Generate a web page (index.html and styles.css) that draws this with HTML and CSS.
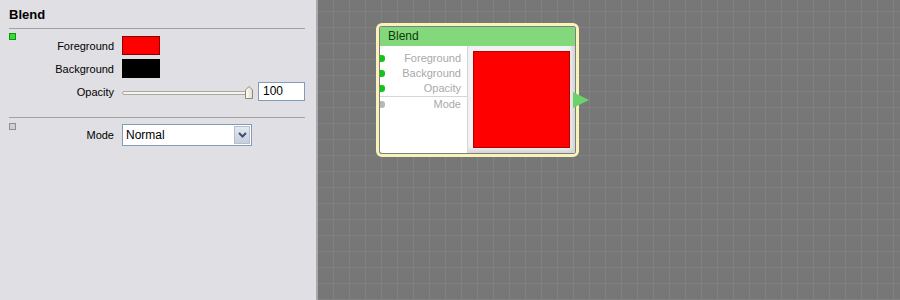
FILE: index.html
```html
<!DOCTYPE html>
<html lang="en">
<head>
    <meta charset="UTF-8">
    <title>Blend</title>
    <link rel="stylesheet" href="styles.css">
</head>
<body>
<div class="app">

    <!-- Properties panel -->
    <div class="panel">
        <h1 class="panel-title">Blend</h1>

        <div class="group">
            <span class="flag flag-on"></span>
            <div class="fields">
                <span class="field-label">Foreground</span>
                <span class="swatch swatch-red"></span>
                <span class="field-label">Background</span>
                <span class="swatch swatch-black"></span>
                <span class="field-label">Opacity</span>
                <div class="slider-row">
                    <div class="slider">
                        <div class="track"></div>
                        <svg class="thumb" width="8" height="13" viewBox="0 0 8 13">
                            <defs>
                                <linearGradient id="tg" x1="0" y1="0" x2="1" y2="0">
                                    <stop offset="0" stop-color="#ffffff"/>
                                    <stop offset="1" stop-color="#e2ddc6"/>
                                </linearGradient>
                            </defs>
                            <polygon points="0.5,4 4,0.5 7.5,4 7.5,12.5 0.5,12.5" fill="url(#tg)" stroke="#8c8a7c"/>
                        </svg>
                    </div>
                    <div class="num-box">100</div>
                </div>
            </div>
        </div>

        <div class="group group-last">
            <span class="flag flag-off"></span>
            <div class="fields fields-mode">
                <span class="field-label">Mode</span>
                <div class="select">
                    <span class="select-text">Normal</span>
                    <span class="select-btn">
                        <svg width="9" height="6" viewBox="0 0 9 6">
                            <polyline points="1,1 4.5,4.5 8,1" fill="none" stroke="#3d4f6e" stroke-width="2"/>
                        </svg>
                    </span>
                </div>
            </div>
        </div>
    </div>

    <!-- Node canvas -->
    <div class="canvas">
        <div class="node">
            <div class="node-box">
                <div class="node-head">Blend</div>
                <div class="node-body">
                    <div class="node-ports">
                        <div class="port"><span class="dot"></span>Foreground</div>
                        <div class="port"><span class="dot"></span>Background</div>
                        <div class="port"><span class="dot"></span>Opacity</div>
                        <div class="port port-mode"><span class="dot dot-off"></span>Mode</div>
                    </div>
                    <div class="node-preview">
                        <div class="preview-square"></div>
                    </div>
                </div>
            </div>
        </div>
        <svg class="node-out" width="16" height="16" viewBox="0 0 16 16">
            <polygon points="0,0 16,8 0,16" fill="#6bd16b"/>
        </svg>
    </div>

</div>
</body>
</html>
```

FILE: styles.css
```css
html, body {
    margin: 0;
    height: 100%;
}
body {
    font-family: "Liberation Sans", Arial, sans-serif;
    font-size: 11px;
    color: #000;
}
.app {
    display: flex;
    height: 300px;
}

/* left panel */
.panel {
    width: 316px;
    flex: none;
    background-color: #e0dfe3;
    border-right: 2px solid #a8a8ab;
}
.panel-title {
    margin: 0;
    height: 28px;
    box-sizing: border-box;
    padding: 7px 0 0 9px;
    font-size: 13px;
    line-height: 16px;
    font-weight: bold;
}
.group {
    display: flex;
    margin: 0 11px 0 9px;
    border-top: 1px solid #a2a2a2;
    padding-bottom: 16px;
}
.flag {
    flex: none;
    width: 5px;
    height: 5px;
    margin-top: 4px;
}
.flag-on {
    background-color: #2fe02f;
    border: 1px solid #129012;
}
.flag-off {
    background-color: #cfcfcf;
    border: 1px solid #8f8f8f;
    margin-top: 5px;
}
.fields {
    display: grid;
    grid-template-columns: 98px auto;
    grid-auto-rows: 19px;
    column-gap: 8px;
    row-gap: 4px;
    padding-top: 7px;
    align-items: center;
}
.fields-mode {
    grid-auto-rows: 22px;
    padding-top: 6px;
}
.field-label {
    text-align: right;
}
.swatch {
    width: 36px;
    height: 17px;
}
.swatch-red {
    background-color: #ff0000;
    border: 1px solid #8a0000;
}
.swatch-black {
    background-color: #000;
    border: 1px solid #000;
}
.slider-row {
    display: flex;
    align-items: center;
    gap: 6px;
}
.slider {
    position: relative;
    width: 130px;
    height: 19px;
}
.track {
    position: absolute;
    left: 0;
    right: 4px;
    top: 9px;
    height: 2px;
    background-color: #f4f3ee;
    border: 1px solid #a9a9a2;
    border-radius: 2px;
}
.thumb {
    position: absolute;
    left: 123px;
    top: 4px;
}
.num-box {
    width: 41px;
    height: 17px;
    line-height: 17px;
    padding-left: 4px;
    background-color: #fff;
    border: 1px solid #7f9db9;
    font-size: 12px;
}
.select {
    display: flex;
    width: 128px;
    height: 20px;
    background-color: #fff;
    border: 1px solid #7f9db9;
}
.select-text {
    flex: 1;
    line-height: 20px;
    padding-left: 3px;
    font-size: 12px;
}
.select-btn {
    width: 16px;
    margin: 1px;
    display: flex;
    align-items: center;
    justify-content: center;
    background: linear-gradient(#e4e8f0, #c6cfdd);
    border: 1px solid #b4bfd1;
    box-sizing: border-box;
}

/* canvas */
.canvas {
    position: relative;
    flex: 1;
    background-color: #777777;
    background-image:
        linear-gradient(to right, #818181 1px, transparent 1px),
        linear-gradient(to bottom, #818181 1px, transparent 1px);
    background-size: 16px 16px;
    background-position: 15px 11px;
}
.node {
    position: absolute;
    left: 58px;
    top: 23px;
    border: 3px solid #f8f3b6;
    border-radius: 6px;
}
.node-box {
    width: 195px;
    border: 1px solid #7e7e7e;
    border-radius: 3px;
    overflow: hidden;
    background-color: #fff;
}
.node-head {
    height: 19px;
    line-height: 19px;
    padding-left: 8px;
    background-color: #84d87c;
    color: #0c380c;
    font-size: 12px;
}
.node-body {
    display: flex;
    height: 107px;
}
.node-ports {
    width: 87px;
    border-right: 1px solid #d6d6d6;
    padding-top: 5px;
}
.port {
    position: relative;
    height: 15px;
    line-height: 15px;
    padding-right: 6px;
    text-align: right;
    color: #a9a9a9;
}
.port-mode {
    border-top: 1px solid #d6d6d6;
}
.dot {
    position: absolute;
    left: 0;
    top: 4px;
    width: 5px;
    height: 7px;
    border-radius: 0 3px 3px 0;
    background-color: #16c416;
}
.dot-off {
    background-color: #b8b8b8;
}
.node-preview {
    width: 107px;
    padding: 5px;
    box-sizing: border-box;
    background-color: #f2f2f2;
    box-shadow: inset -3px -3px 4px #d2d2d2;
}
.preview-square {
    width: 95px;
    height: 95px;
    background-color: #ff0000;
    border: 1px solid #b80000;
}
.node-out {
    position: absolute;
    left: 255px;
    top: 92px;
}
```
